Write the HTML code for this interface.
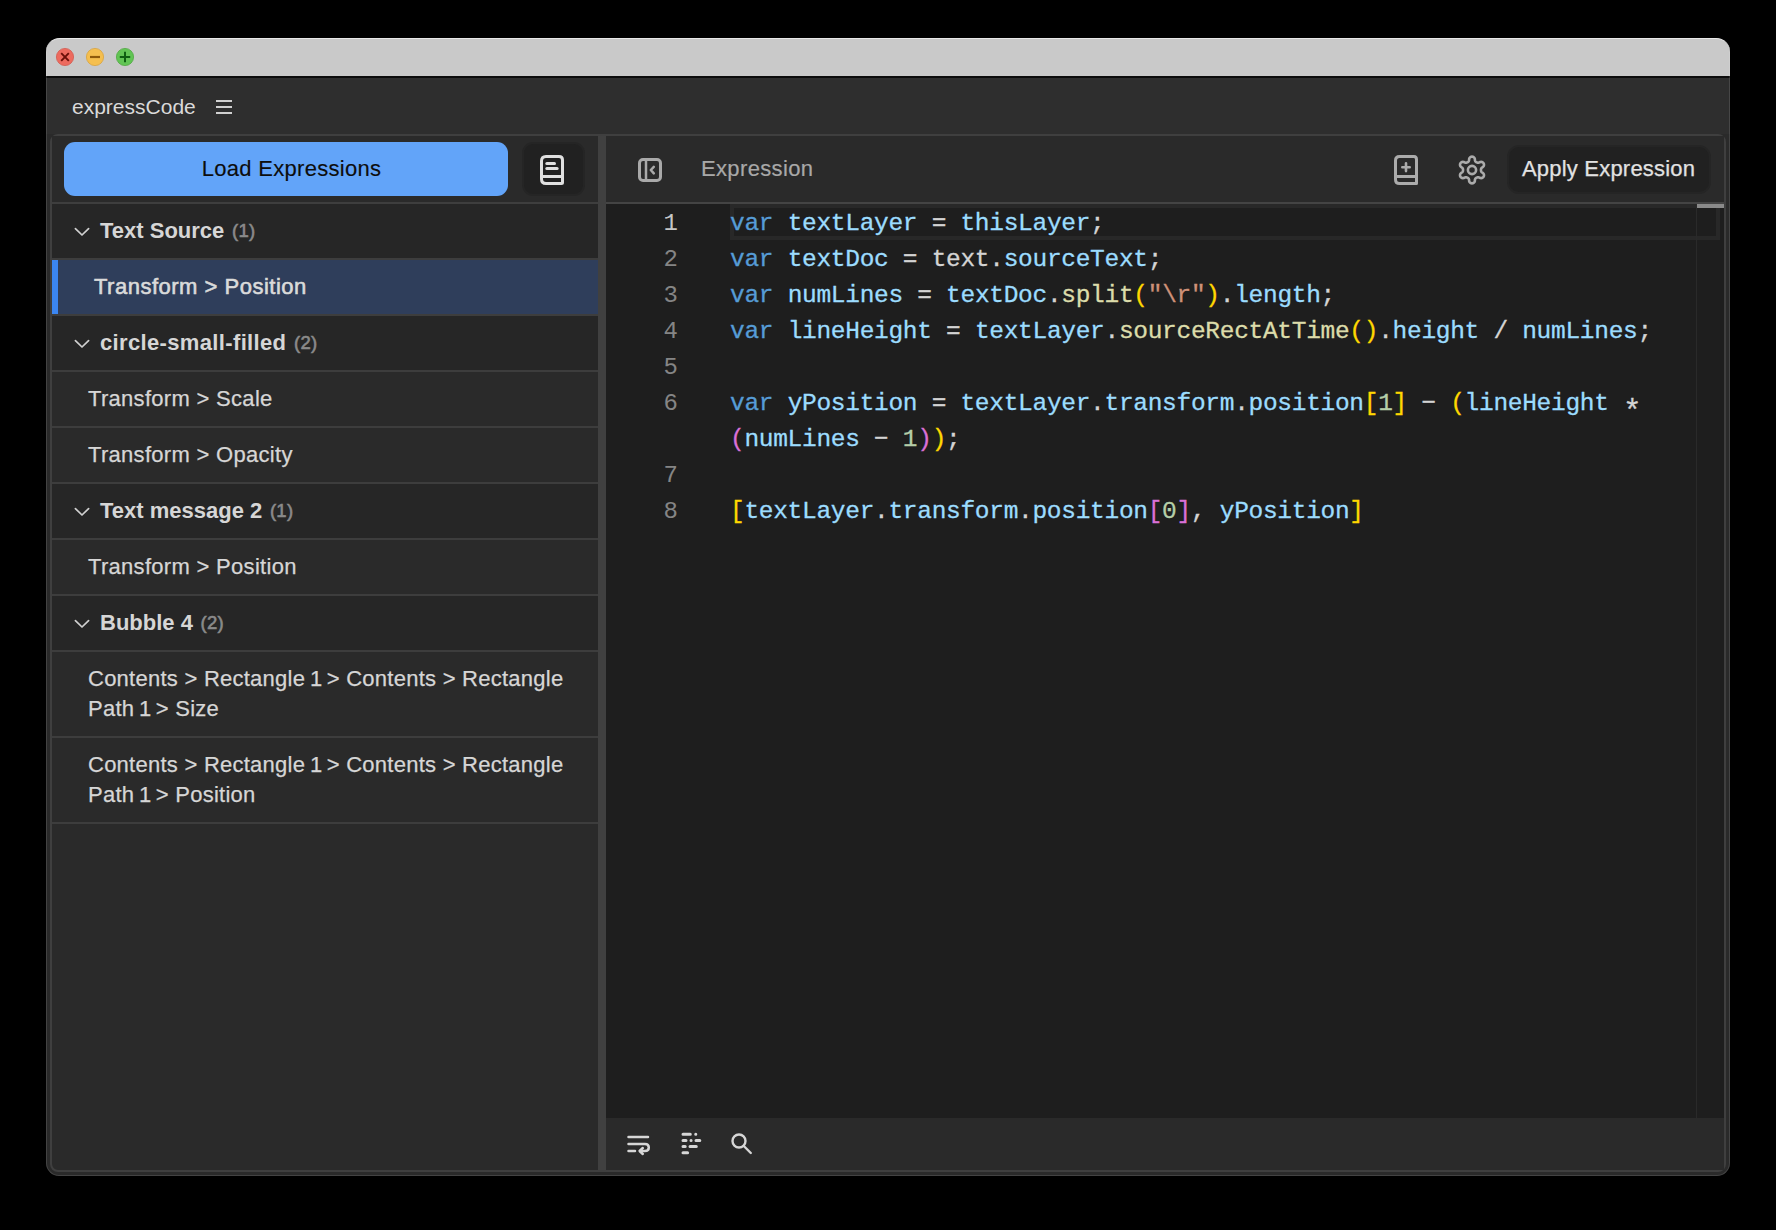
<!DOCTYPE html>
<html><head><meta charset="utf-8">
<style>
*{box-sizing:border-box;margin:0;padding:0}
html,body{width:1776px;height:1230px;background:#000;overflow:hidden;font-family:"Liberation Sans",sans-serif;position:relative}
div,span.a,svg{position:absolute}
.t{white-space:nowrap;font-size:22px;color:#dcdcdc;line-height:26px}
#win{left:46px;top:38px;width:1684px;height:1138px;border-radius:13px;background:#2a2a2a;overflow:hidden}
#winb{left:46px;top:38px;width:1684px;height:1138px;border-radius:13px;box-shadow:inset 0 0 0 1px rgba(255,255,255,0.12)}
#title{left:46px;top:38px;width:1684px;height:38px;background:#c9c9c9;border-radius:14px 14px 0 0;border-top:1px solid #e6e6e6}
.tl{top:9px;width:19px;height:19px;border-radius:50%}
#sep{left:46px;top:76px;width:1684px;height:2px;background:#0c0c0c}
#apphdr{left:46px;top:78px;width:1684px;height:56px;background:#2e2e2e}
#panel{left:50px;top:134px;width:1676px;height:1038px;border:2px solid #3f3f3f;border-radius:8px;background:#2a2a2a}
.row{left:52px;width:546px;border-bottom:2px solid #3d3d3d;background:#2a2a2a}
.grp{font-weight:bold;font-size:22px;color:#d6d6d6;letter-spacing:0}
.cnt{font-size:18.5px;color:#8a8a8a;letter-spacing:0.3px;-webkit-text-stroke:0.6px #8a8a8a;margin-left:1.5px;position:relative;top:-1px}
.one{letter-spacing:-1.8px;margin-left:-1.6px}
.item{font-size:22px;color:#d6d6d6;letter-spacing:0.3px;-webkit-text-stroke:0.25px #d6d6d6}
.code{font-family:"Liberation Mono",monospace;font-size:24.5px;letter-spacing:-0.3px;line-height:36px;white-space:pre;color:#d4d4d4;-webkit-text-stroke:0.3px currentColor}
.ln{font-family:"Liberation Mono",monospace;font-size:24px;line-height:36px;color:#858585;text-align:right;width:60px}
.k{color:#569cd6}.v{color:#9cdcfe}.f{color:#dcdcaa}.s{color:#ce9178}.n{color:#b5cea8}.g{color:#ffd700}.p{color:#da70d6}
</style></head>
<body>
<div id="win"></div>
<div id="title"></div>
<svg style="left:46px;top:38px" width="100" height="38" viewBox="46 38 100 38">
<circle cx="65" cy="57" r="8.6" fill="#ed6a5e" stroke="#d35a4f" stroke-width="0.8"/>
<circle cx="95" cy="57" r="8.6" fill="#f5bf4f" stroke="#d9a33e" stroke-width="0.8"/>
<circle cx="125" cy="57" r="8.6" fill="#61c554" stroke="#4fa840" stroke-width="0.8"/>
<path d="M61.2 53.2L68.8 60.8M68.8 53.2L61.2 60.8" stroke="#6a0f08" stroke-width="1.9"/>
<path d="M90 57H100" stroke="#8f5a0b" stroke-width="2.2"/>
<path d="M125 51.8V62.2M119.8 57H130.2" stroke="#0e5f12" stroke-width="2"/>
</svg>
<div id="sep"></div>
<div id="apphdr"></div>
<div class="t" style="left:72px;top:94px;font-size:21px;color:#dadada">expressCode</div>
<!-- hamburger -->
<div style="left:216px;top:100px;width:16px;height:2px;background:#d0d0d0"></div>
<div style="left:216px;top:106px;width:16px;height:2px;background:#d0d0d0"></div>
<div style="left:216px;top:112px;width:16px;height:2px;background:#d0d0d0"></div>

<div id="panel"></div>
<!-- sidebar header -->
<div style="left:52px;top:136px;width:546px;height:68px;background:#2a2a2a;border-bottom:2px solid #3e3e3e"></div>
<div style="left:64px;top:142px;width:444px;height:54px;background:#62a4f9;border-radius:11px"></div>
<div class="t" style="left:64px;top:155px;width:444px;text-align:center;color:#0d0d0d;font-size:22px;letter-spacing:0.3px;-webkit-text-stroke:0.15px #0d0d0d;padding-left:11px;padding-top:1px">Load Expressions</div>
<div style="left:522px;top:142px;width:63px;height:54px;background:#212121;border-radius:11px;border:2px solid #252525"></div>

<!-- list -->
<div class="row" style="top:204px;height:56px;background:#262626"></div>
<div class="row" style="top:260px;height:56px;background:#2f3e5b"></div>
<div style="left:52px;top:260px;width:6px;height:54px;background:#3b86f2"></div>
<div class="row" style="top:316px;height:56px;background:#262626"></div>
<div class="row" style="top:372px;height:56px"></div>
<div class="row" style="top:428px;height:56px"></div>
<div class="row" style="top:484px;height:56px;background:#262626"></div>
<div class="row" style="top:540px;height:56px"></div>
<div class="row" style="top:596px;height:56px;background:#262626"></div>
<div class="row" style="top:652px;height:86px"></div>
<div class="row" style="top:738px;height:86px"></div>

<div class="t" style="left:100px;top:218px"><span class="grp">Text Source</span> <span class="cnt">(1)</span></div>
<div class="t item" style="left:94px;top:274px;letter-spacing:0.5px;-webkit-text-stroke:0.6px #dadada;color:#dadada">Transform &gt; Position</div>
<div class="t" style="left:100px;top:330px"><span class="grp" style="letter-spacing:0.35px">circle-small-filled</span> <span class="cnt">(2)</span></div>
<div class="t item" style="left:88px;top:386px">Transform &gt; Scale</div>
<div class="t item" style="left:88px;top:442px">Transform &gt; Opacity</div>
<div class="t" style="left:100px;top:498px"><span class="grp">Text message 2</span> <span class="cnt">(1)</span></div>
<div class="t item" style="left:88px;top:554px">Transform &gt; Position</div>
<div class="t" style="left:100px;top:610px"><span class="grp">Bubble 4</span> <span class="cnt">(2)</span></div>
<div class="t item" style="left:88px;top:664px;line-height:30px;letter-spacing:0.25px">Contents &gt; Rectangle <span class="one">1</span> &gt; Contents &gt; Rectangle<br>Path <span class="one">1</span> &gt; Size</div>
<div class="t item" style="left:88px;top:750px;line-height:30px;letter-spacing:0.25px">Contents &gt; Rectangle <span class="one">1</span> &gt; Contents &gt; Rectangle<br>Path <span class="one">1</span> &gt; Position</div>

<!-- divider -->
<div style="left:598px;top:136px;width:8px;height:1034px;background:#404040"></div>

<!-- editor header -->
<div style="left:606px;top:136px;width:1118px;height:68px;background:#2a2a2a;border-bottom:2px solid #444"></div>
<div class="t" style="left:701px;top:156px;color:#a8a8a8;letter-spacing:0.35px;-webkit-text-stroke:0.2px #a8a8a8">Expression</div>
<div style="left:1507px;top:145px;width:204px;height:49px;background:#212121;border-radius:12px;border:2px solid #252525"></div>
<div class="t" style="left:1522px;top:156px;color:#e2e2e2;letter-spacing:0.2px;-webkit-text-stroke:0.25px #e2e2e2">Apply Expression</div>

<!-- editor -->
<div style="left:606px;top:204px;width:1118px;height:914px;background:#1e1e1e"></div>
<div style="left:730px;top:204px;width:990px;height:36px;border:4px solid #282828"></div>
<div style="left:1696px;top:204px;width:1px;height:914px;background:#2a2a2a"></div>
<div style="left:1697px;top:204px;width:27px;height:4px;background:#8a8a8a"></div>

<div class="ln" style="left:618px;top:206px;color:#c6c6c6">1</div>
<div class="ln" style="left:618px;top:242px">2</div>
<div class="ln" style="left:618px;top:278px">3</div>
<div class="ln" style="left:618px;top:314px">4</div>
<div class="ln" style="left:618px;top:350px">5</div>
<div class="ln" style="left:618px;top:386px">6</div>
<div class="ln" style="left:618px;top:458px">7</div>
<div class="ln" style="left:618px;top:494px">8</div>

<div class="code" style="left:730px;top:206px"><span class="k">var</span> <span class="v">textLayer</span> = <span class="v">thisLayer</span>;
<span class="k">var</span> <span class="v">textDoc</span> = text.<span class="v">sourceText</span>;
<span class="k">var</span> <span class="v">numLines</span> = <span class="v">textDoc</span>.<span class="f">split</span><span class="g">(</span><span class="s">"\r"</span><span class="g">)</span>.<span class="v">length</span>;
<span class="k">var</span> <span class="v">lineHeight</span> = <span class="v">textLayer</span>.<span class="f">sourceRectAtTime</span><span class="g">()</span>.<span class="v">height</span> / <span class="v">numLines</span>;

<span class="k">var</span> <span class="v">yPosition</span> = <span class="v">textLayer</span>.<span class="v">transform</span>.<span class="v">position</span><span class="g">[</span><span class="n">1</span><span class="g">]</span> &#x2212; <span class="g">(</span><span class="v">lineHeight</span> <span style="position:relative;top:11px;font-size:31px;line-height:0;letter-spacing:-4.2px">*</span>
<span class="p">(</span><span class="v">numLines</span> &#x2212; <span class="n">1</span><span class="p">)</span><span class="g">)</span>;

<span class="g">[</span><span class="v">textLayer</span>.<span class="v">transform</span>.<span class="v">position</span><span class="p">[</span><span class="n">0</span><span class="p">]</span>, <span class="v">yPosition</span><span class="g">]</span></div>

<!-- footer -->
<div style="left:606px;top:1118px;width:1118px;height:52px;background:#2a2a2a"></div>


<!-- book icon sidebar -->
<svg style="left:538px;top:153px" width="28" height="34" viewBox="-2 -2 28 34" fill="none" stroke="#e0e0e0" stroke-width="3" stroke-linecap="round" stroke-linejoin="round">
<path d="M6 1.5H19Q22.5 1.5 22.5 5V27.5Q22.5 28.5 21.5 28.5H6Q1.5 28.5 1.5 24V6Q1.5 1.5 6 1.5Z"/>
<path d="M1.5 21.5H22.5"/><path d="M6.8 8.4H14.5"/><path d="M6.8 13.6H17.1"/>
</svg>
<!-- sidebar toggle -->
<svg style="left:636px;top:156px" width="28" height="28" viewBox="-2 -2 28 28" fill="none" stroke="#a9a9a9" stroke-width="3" stroke-linecap="round" stroke-linejoin="round">
<rect x="1.5" y="1.5" width="21" height="21" rx="3.5"/>
<path d="M8 2V22" stroke-width="2.5"/><path d="M15.8 8.8L12.8 12L15.8 15.4" stroke-width="2.5"/>
</svg>
<!-- book plus -->
<svg style="left:1392px;top:153px" width="28" height="34" viewBox="-2 -2 28 34" fill="none" stroke="#ababab" stroke-width="3" stroke-linecap="round" stroke-linejoin="round">
<path d="M5.5 1.5H20Q22.5 1.5 22.5 4.5V28.5H5.5Q1.5 28.5 1.5 24.5V5.5Q1.5 1.5 5.5 1.5Z"/>
<path d="M1.5 21.5H22.5"/><path d="M8.3 12.2H15.7M12 8.3V16.1" stroke-width="2.6"/>
</svg>
<!-- gear -->
<svg style="left:1452px;top:150px" width="40" height="40" viewBox="-20 -20 40 40" fill="none" stroke="#ababab" stroke-width="2.6" stroke-linejoin="round">
<path d="M-4.18 -7.97 L-3.82 -8.20 L-3.50 -8.50 L-3.25 -8.85 L-3.06 -9.24 L-2.94 -9.66 L-2.90 -10.09 L-2.90 -10.50 L-2.80 -11.25 L-2.51 -11.95 L-2.05 -12.55 L-1.45 -13.01 L-0.75 -13.30 L0.00 -13.40 L0.75 -13.30 L1.45 -13.01 L2.05 -12.55 L2.51 -11.95 L2.80 -11.25 L2.90 -10.50 L2.90 -10.09 L2.94 -9.66 L3.06 -9.24 L3.25 -8.85 L3.50 -8.50 L3.82 -8.20 L4.18 -7.97 L4.29 -7.91 L4.40 -7.85 L4.50 -7.79 L4.60 -7.73 L4.71 -7.67 L4.81 -7.61 L5.20 -7.41 L5.61 -7.28 L6.04 -7.24 L6.48 -7.27 L6.90 -7.38 L7.29 -7.56 L7.64 -7.76 L8.34 -8.05 L9.09 -8.15 L9.84 -8.05 L10.54 -7.76 L11.14 -7.30 L11.60 -6.70 L11.89 -6.00 L11.99 -5.25 L11.89 -4.50 L11.60 -3.80 L11.14 -3.20 L10.54 -2.74 L10.19 -2.54 L9.84 -2.28 L9.53 -1.97 L9.29 -1.61 L9.11 -1.22 L9.01 -0.79 L8.99 -0.36 L9.00 -0.24 L9.00 -0.12 L9.00 -0.00 L9.00 0.12 L9.00 0.24 L8.99 0.36 L9.01 0.79 L9.11 1.22 L9.29 1.61 L9.53 1.97 L9.84 2.28 L10.19 2.54 L10.54 2.74 L11.14 3.20 L11.60 3.80 L11.89 4.50 L11.99 5.25 L11.89 6.00 L11.60 6.70 L11.14 7.30 L10.54 7.76 L9.84 8.05 L9.09 8.15 L8.34 8.05 L7.64 7.76 L7.29 7.56 L6.90 7.38 L6.48 7.27 L6.04 7.24 L5.61 7.28 L5.20 7.41 L4.81 7.61 L4.71 7.67 L4.60 7.73 L4.50 7.79 L4.40 7.85 L4.29 7.91 L4.18 7.97 L3.82 8.20 L3.50 8.50 L3.25 8.85 L3.06 9.24 L2.94 9.66 L2.90 10.09 L2.90 10.50 L2.80 11.25 L2.51 11.95 L2.05 12.55 L1.45 13.01 L0.75 13.30 L0.00 13.40 L-0.75 13.30 L-1.45 13.01 L-2.05 12.55 L-2.51 11.95 L-2.80 11.25 L-2.90 10.50 L-2.90 10.09 L-2.94 9.66 L-3.06 9.24 L-3.25 8.85 L-3.50 8.50 L-3.82 8.20 L-4.18 7.97 L-4.29 7.91 L-4.40 7.85 L-4.50 7.79 L-4.60 7.73 L-4.71 7.67 L-4.81 7.61 L-5.20 7.41 L-5.61 7.28 L-6.04 7.24 L-6.48 7.27 L-6.90 7.38 L-7.29 7.56 L-7.64 7.76 L-8.34 8.05 L-9.09 8.15 L-9.84 8.05 L-10.54 7.76 L-11.14 7.30 L-11.60 6.70 L-11.89 6.00 L-11.99 5.25 L-11.89 4.50 L-11.60 3.80 L-11.14 3.20 L-10.54 2.74 L-10.19 2.54 L-9.84 2.28 L-9.53 1.97 L-9.29 1.61 L-9.11 1.22 L-9.01 0.79 L-8.99 0.36 L-9.00 0.24 L-9.00 0.12 L-9.00 0.00 L-9.00 -0.12 L-9.00 -0.24 L-8.99 -0.36 L-9.01 -0.79 L-9.11 -1.22 L-9.29 -1.61 L-9.53 -1.97 L-9.84 -2.28 L-10.19 -2.54 L-10.54 -2.74 L-11.14 -3.20 L-11.60 -3.80 L-11.89 -4.50 L-11.99 -5.25 L-11.89 -6.00 L-11.60 -6.70 L-11.14 -7.30 L-10.54 -7.76 L-9.84 -8.05 L-9.09 -8.15 L-8.34 -8.05 L-7.64 -7.76 L-7.29 -7.56 L-6.90 -7.38 L-6.48 -7.27 L-6.04 -7.24 L-5.61 -7.28 L-5.20 -7.41 L-4.81 -7.61 L-4.71 -7.67 L-4.60 -7.73 L-4.50 -7.79 L-4.40 -7.85 L-4.29 -7.91Z"/><circle cx="0" cy="0" r="4.1"/>
</svg>

<!-- footer icons -->
<svg style="left:620px;top:1126px" width="140" height="36" viewBox="620 1126 140 36" fill="none" stroke="#d6d6d6" stroke-width="2.5" stroke-linecap="round" stroke-linejoin="round">
<path d="M628.5 1137H648"/>
<path d="M628.5 1144H645Q648.8 1144 648.8 1147.5Q648.8 1151 645 1151H640.5"/>
<path d="M642.8 1148L639.6 1151L642.8 1154"/>
<path d="M628.5 1151H635"/>
<g stroke-width="3">
<path d="M683 1134.3H690.3M695.7 1134.3H695.8"/>
<path d="M683 1140.4H686M691 1140.4H691.1M696 1140.4H699.8"/>
<path d="M683 1146.5H685.2M690 1146.5H696.3"/>
<path d="M683 1152.8H687.6"/>
</g>
<circle cx="739" cy="1141" r="6.5" stroke-width="2.4"/>
<path d="M743.8 1146L750.8 1153" stroke-width="2.4"/>
</svg>
<!-- chevrons -->
<svg style="left:0;top:0" width="1776" height="1230" viewBox="0 0 1776 1230" fill="none" stroke="#d0d0d0" stroke-width="1.7" stroke-linecap="round" stroke-linejoin="round">
<path d="M75.4 228.6L82 235.0L88.6 228.6"/>
<path d="M75.4 340.6L82 347.0L88.6 340.6"/>
<path d="M75.4 508.6L82 515.0L88.6 508.6"/>
<path d="M75.4 620.6L82 627.0L88.6 620.6"/>
</svg>
<div id="winb"></div>
</body></html>
